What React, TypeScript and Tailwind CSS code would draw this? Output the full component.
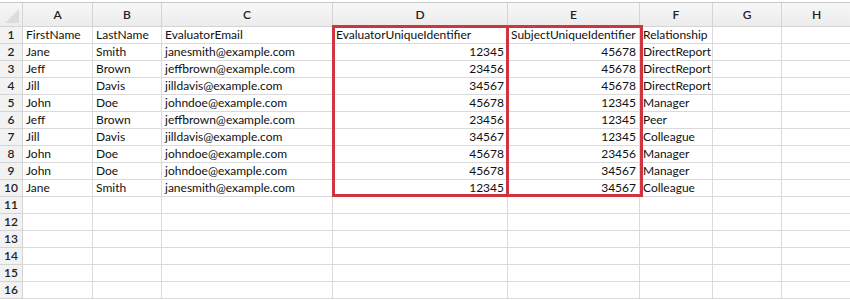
import React from "react";

const cols = [23, 70, 69, 171, 175, 132, 73, 69, 70];
const letters = ["A", "B", "C", "D", "E", "F", "G", "H"];

const data: (string | number)[][] = [
  ["FirstName", "LastName", "EvaluatorEmail", "EvaluatorUniqueIdentifier", "SubjectUniqueIdentifier", "Relationship"],
  ["Jane", "Smith", "janesmith@example.com", 12345, 45678, "DirectReport"],
  ["Jeff", "Brown", "jeffbrown@example.com", 23456, 45678, "DirectReport"],
  ["Jill", "Davis", "jilldavis@example.com", 34567, 45678, "DirectReport"],
  ["John", "Doe", "johndoe@example.com", 45678, 12345, "Manager"],
  ["Jeff", "Brown", "jeffbrown@example.com", 23456, 12345, "Peer"],
  ["Jill", "Davis", "jilldavis@example.com", 34567, 12345, "Colleague"],
  ["John", "Doe", "johndoe@example.com", 45678, 23456, "Manager"],
  ["John", "Doe", "johndoe@example.com", 45678, 34567, "Manager"],
  ["Jane", "Smith", "janesmith@example.com", 12345, 34567, "Colleague"],
];

export default function App() {
  const rows = Array.from({ length: 16 }, (_, i) => i);
  return (
    <div
      className="relative w-[850px] h-[300px] overflow-hidden bg-white text-[12px] text-[#111]"
      style={{ fontFamily: "Lato, 'Open Sans', sans-serif" }}
    >
      <div className="h-[2px] bg-white" />
      <div className="h-[1px] bg-[#c8c8c8]" />
      <div
        className="grid"
        style={{ gridTemplateColumns: cols.map((c) => c + "px").join(" "), gridAutoRows: "17px", gridTemplateRows: "24px" }}
      >
        <div className="relative bg-gradient-to-b from-[#f7f7f7] to-[#ececec] border-r border-b border-[#d4d4d4]">
          <div className="absolute right-[3px] bottom-[3px] w-0 h-0 border-l-[14px] border-l-transparent border-b-[14px] border-b-[#dcdcdc]" />
        </div>
        {letters.map((l) => (
          <div
            key={l}
            className="flex items-center justify-center bg-gradient-to-b from-[#f7f7f7] to-[#ececec] border-r border-b border-[#d4d4d4] font-semibold text-[#222]"
          >
            {l}
          </div>
        ))}
        {rows.map((r) => {
          const rowData = data[r] || [];
          return (
            <React.Fragment key={r}>
              <div className="flex items-center justify-center bg-[#f2f2f2] border-r border-b border-[#d4d4d4] font-semibold text-[#222] leading-none">
                {r + 1}
              </div>
              {letters.map((l, ci) => {
                const v = rowData[ci];
                const isNum = typeof v === "number";
                return (
                  <div
                    key={l}
                    className={`flex items-center px-[3px] border-r border-b border-[#dadada] whitespace-nowrap overflow-visible leading-none ${isNum ? "justify-end" : "justify-start"}`}
                  >
                    {v !== undefined ? String(v) : ""}
                  </div>
                );
              })}
            </React.Fragment>
          );
        })}
      </div>
      <div className="absolute left-[332px] top-[25px] w-[177px] h-[172px] border-[3px] border-[#d0343f] pointer-events-none" />
      <div className="absolute left-[506px] top-[25px] w-[137px] h-[172px] border-[3px] border-[#d0343f] pointer-events-none" />
    </div>
  );
}
